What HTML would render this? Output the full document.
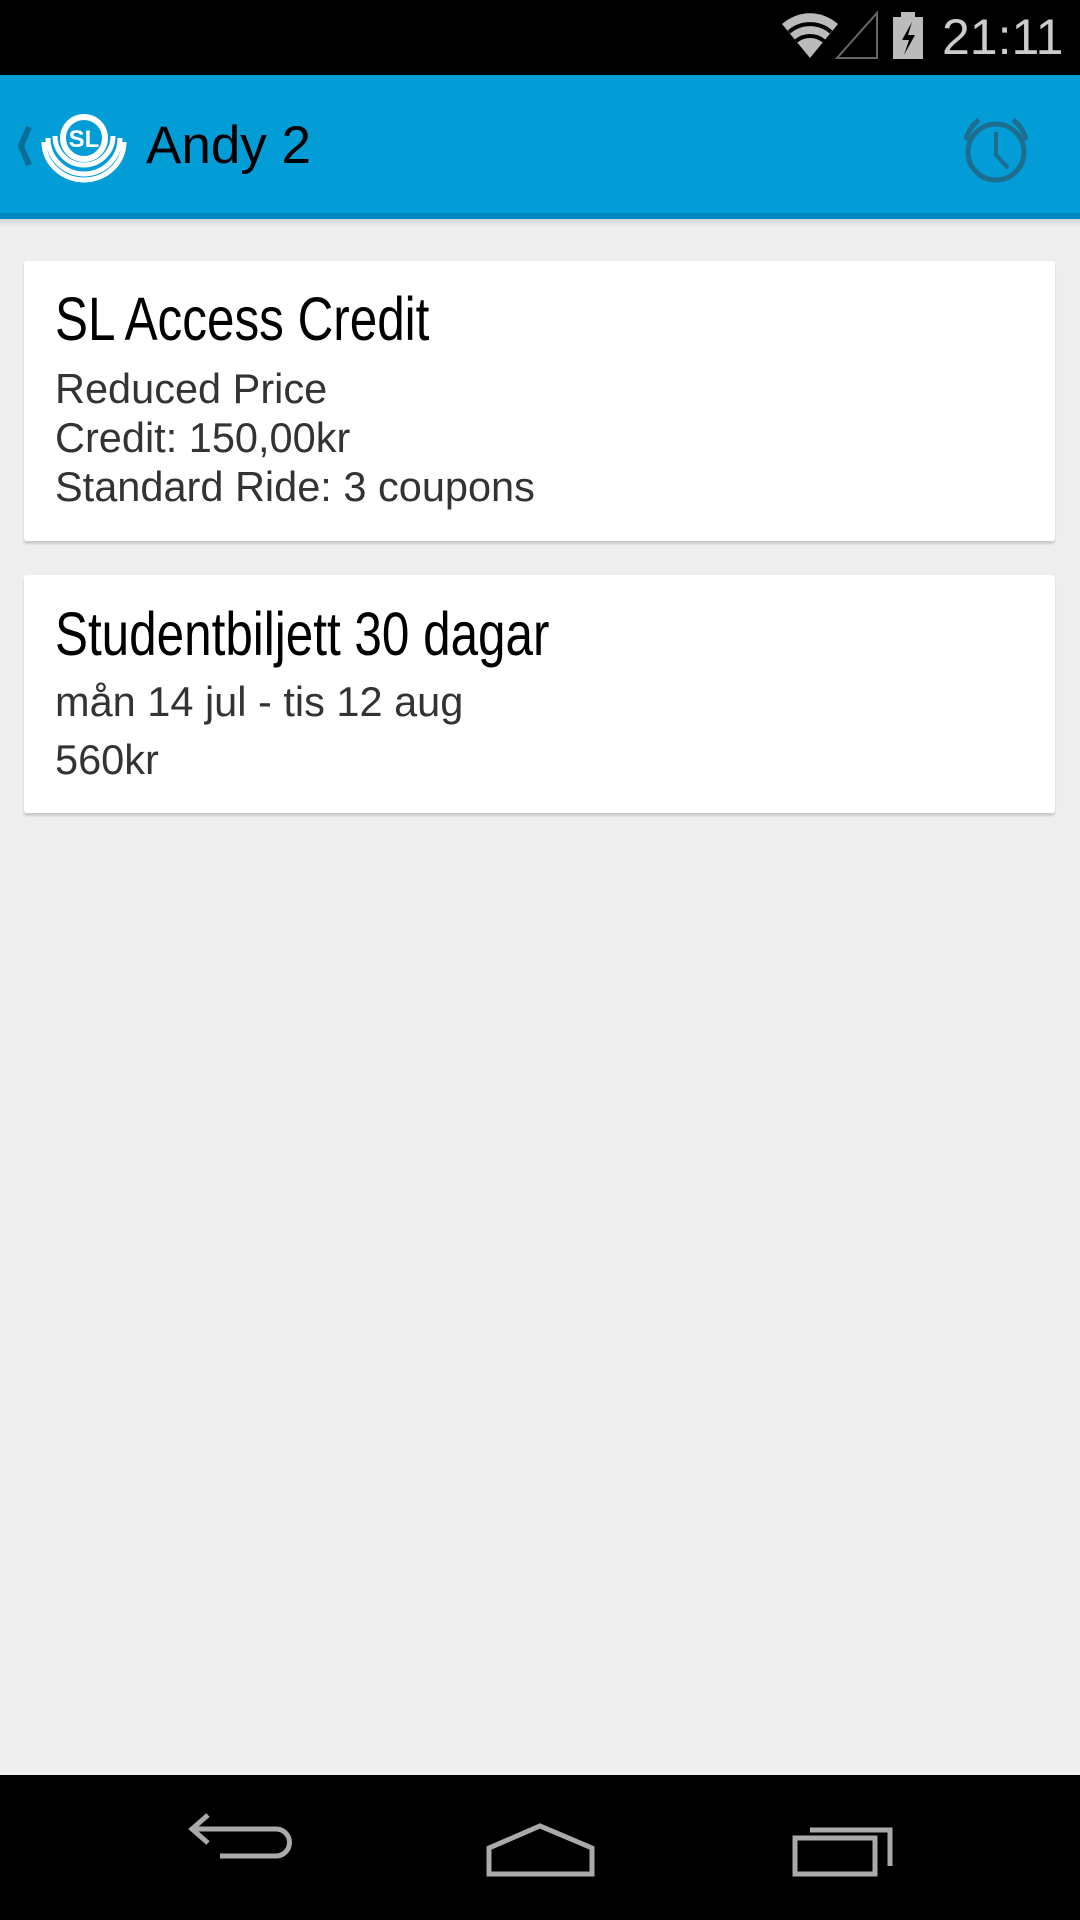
<!DOCTYPE html>
<html><head><meta charset="utf-8"><style>
*{margin:0;padding:0;box-sizing:border-box}
body{width:1080px;height:1920px;background:#eeeeee;position:relative;overflow:hidden;font-family:"Liberation Sans",sans-serif}
.abs{position:absolute}
.card{position:absolute;left:24px;width:1031px;background:#fff;border-radius:3px;box-shadow:0 3px 2px rgba(0,0,0,0.15)}
.t{position:absolute;left:55px;white-space:nowrap;transform-origin:0 0;color:#000;font-size:61px;line-height:60px}
.b{position:absolute;left:55px;white-space:nowrap;color:#333;font-size:41.5px;line-height:40px}
</style></head><body>
<div class="abs" style="left:0;top:0;width:1080px;height:75px;background:#000"></div>
<svg class="abs" style="left:770px;top:8px" width="300" height="60" viewBox="770 8 300 60">
<path d="M810 58 L782 24 A42 42 0 0 1 838 24 Z" fill="#bbb"/>
<path d="M789 32 A32 32 0 0 1 831 32" stroke="#000" stroke-width="4" fill="none"/>
<path d="M796 41 A22 22 0 0 1 824 41" stroke="#000" stroke-width="4" fill="none"/>
<path d="M877 13 L877 58 L837 58 Z" fill="none" stroke="#666" stroke-width="2"/>
<rect x="893" y="17" width="30" height="42" fill="#bbb"/><rect x="901" y="12" width="14" height="6" fill="#bbb"/>
<path d="M912 22 L902 40 L909 40 L904 55 L915 35 L908 35 Z" fill="#000"/>
</svg>
<div class="abs" style="left:942px;top:12px;font-size:50px;color:#ccc;line-height:50px">21:11</div>
<div class="abs" style="left:0;top:75px;width:1080px;height:138px;background:#029cd6"></div>
<div class="abs" style="left:0;top:213px;width:1080px;height:6px;background:#0288c0"></div>
<div class="abs" style="left:0;top:219px;width:1080px;height:8px;background:linear-gradient(#d6d6d6,#eeeeee)"></div>
<svg class="abs" style="left:10px;top:110px" width="120" height="80" viewBox="10 110 120 80">
<path d="M29 127 L21 146 L29 165" stroke="#0a6f98" stroke-width="6" fill="none"/>
<circle cx="84" cy="138" r="21" fill="none" stroke="#fff" stroke-width="6"/>
<text x="84" y="147" font-size="24" font-weight="bold" fill="#fff" text-anchor="middle" font-family="Liberation Sans">SL</text>
<path d="M55 136 A29 29 0 0 0 113 136" stroke="#fff" stroke-width="5" fill="none"/>
<path d="M48 138 A36 36 0 0 0 120 138" stroke="#fff" stroke-width="5" fill="none"/>
<path d="M44 142 A40 38 0 0 0 124 142" stroke="#fff" stroke-width="5" fill="none"/>
</svg>
<div class="abs" style="left:146px;top:119px;font-size:53px;line-height:53px;color:#000">Andy 2</div>
<svg class="abs" style="left:956px;top:110px" width="80" height="80" viewBox="956 110 80 80">
<circle cx="996" cy="152" r="28" fill="none" stroke="#1d6e8e" stroke-width="5"/>
<path d="M996 132 L996 155 L1008 168" stroke="#1d6e8e" stroke-width="4" fill="none"/>
<path d="M966 140 A34 34 0 0 1 979 120" stroke="#1d6e8e" stroke-width="5" fill="none"/>
<path d="M1026 140 A34 34 0 0 0 1013 120" stroke="#1d6e8e" stroke-width="5" fill="none"/>
</svg>
<div class="card" style="top:261px;height:280px">
<div class="t" style="top:28px;left:31px;transform:scaleX(0.81)">SL Access Credit</div>
<div class="b" style="left:31px;top:108px">Reduced Price</div>
<div class="b" style="left:31px;top:157px">Credit: 150,00kr</div>
<div class="b" style="left:31px;top:206px">Standard Ride: 3 coupons</div>
</div>
<div class="card" style="top:575px;height:238px">
<div class="t" style="top:29px;left:31px;transform:scaleX(0.81)">Studentbiljett 30 dagar</div>
<div class="b" style="left:31px;top:107px">mån 14 jul - tis 12 aug</div>
<div class="b" style="left:31px;top:165px">560kr</div>
</div>
<div class="abs" style="left:0;top:1775px;width:1080px;height:145px;background:#000"></div>
<svg class="abs" style="left:0;top:1775px" width="1080" height="145" viewBox="0 1775 1080 145">
<path d="M208 1815 L192 1829 L208 1843 M193 1829 L276 1829 A13 13 0 0 1 276 1856 L220 1856" stroke="#aaa" stroke-width="5" fill="none"/>
<path d="M489 1848 L489 1874 L592 1874 L592 1848 L540 1826 Z" stroke="#aaa" stroke-width="5" fill="none"/>
<rect x="795" y="1838" width="80" height="36" stroke="#aaa" stroke-width="5" fill="none"/>
<path d="M810 1830 L890 1830 L890 1866" stroke="#aaa" stroke-width="5" fill="none"/>
</svg>
</body></html>
